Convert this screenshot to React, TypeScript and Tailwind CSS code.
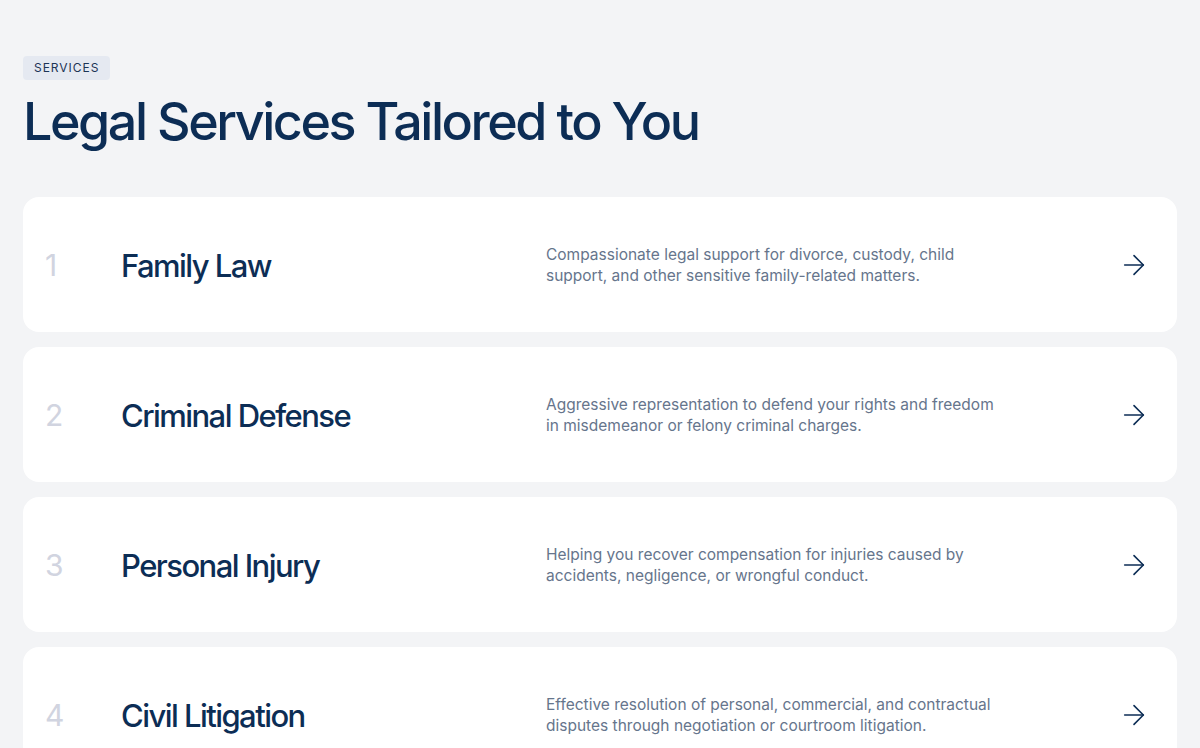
import { ArrowRight } from "lucide-react";

const services = [
  {
    title: "Family Law",
    text: "Compassionate legal support for divorce, custody, child support, and other sensitive family-related matters.",
  },
  {
    title: "Criminal Defense",
    text: "Aggressive representation to defend your rights and freedom in misdemeanor or felony criminal charges.",
  },
  {
    title: "Personal Injury",
    text: "Helping you recover compensation for injuries caused by accidents, negligence, or wrongful conduct.",
  },
  {
    title: "Civil Litigation",
    text: "Effective resolution of personal, commercial, and contractual disputes through negotiation or courtroom litigation.",
  },
];

function ServiceRow({ index, title, text }: { index: number; title: string; text: string }) {
  return (
    <div className="flex items-center rounded-2xl bg-white pl-[22px] pr-[27px] pt-[47px] pb-[46px]">
      <span className="w-[76px] shrink-0 text-[30px] leading-none text-[#d1d4e0]">{index}</span>
      <h3 className="w-[425px] shrink-0 text-[31px] font-medium leading-none tracking-[-0.05em] text-[#0c2d55]">
        {title}
      </h3>
      <p className="w-[455px] shrink-0 text-[15.5px] leading-[21px] text-[#66758c]">{text}</p>
      <div className="ml-auto text-[#0c2d55]">
        <ArrowRight size={32} strokeWidth={1.2} />
      </div>
    </div>
  );
}

export default function App() {
  return (
    <div className="min-h-screen bg-[#f3f4f6] px-[23px] pt-[54px] pb-10 font-['Inter',sans-serif]">
      <span className="inline-block rounded-[4px] bg-[#e5e9f1] px-[11px] py-[5px] text-[12px] leading-[14px] tracking-[0.08em] text-[#1d3556]">
        SERVICES
      </span>
      <h2 className="mt-[10px] text-[52px] font-medium leading-[64px] tracking-[-0.047em] text-[#0c2d55]">
        Legal Services Tailored to You
      </h2>
      <div className="mt-[43px] flex flex-col gap-[15px]">
        {services.map((s, i) => (
          <ServiceRow key={s.title} index={i + 1} title={s.title} text={s.text} />
        ))}
      </div>
    </div>
  );
}
